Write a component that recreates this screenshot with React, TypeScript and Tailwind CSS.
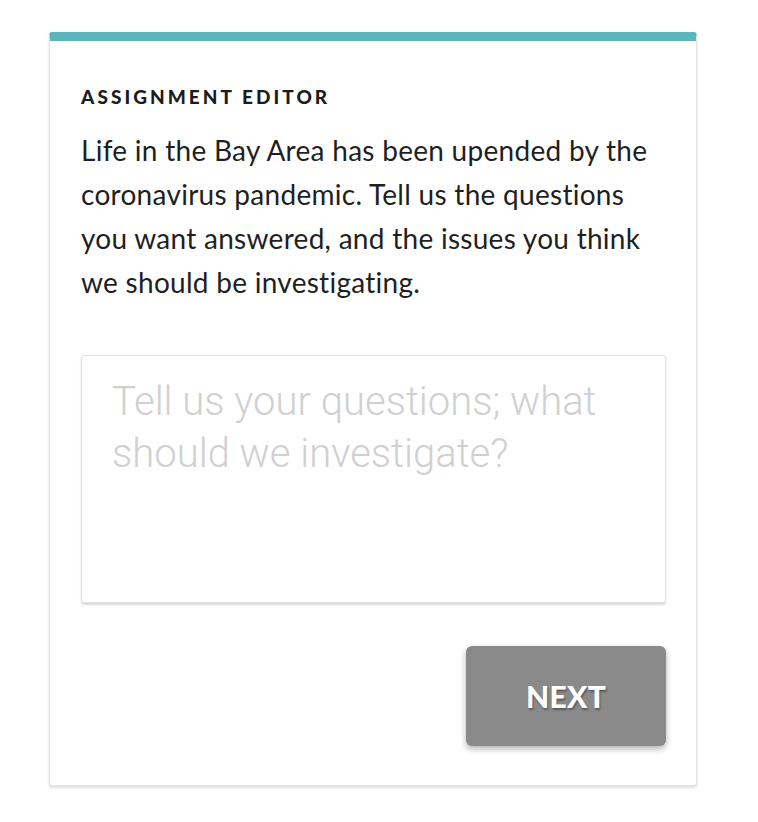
export default function App() {
  return (
    <div className="min-h-screen bg-white pt-8 pl-[49px]" style={{ fontFamily: "Lato, 'Noto Sans', sans-serif" }}>
      <div className="w-[648px] h-[754px] rounded-[3px] border-x border-b border-[#e3e3e3] border-t-[9px] border-t-[#5bb5bc] bg-white shadow-[0_2px_3px_rgba(0,0,0,0.12)] px-[31px] pt-[45px]">
        <h2 className="text-[19px] font-black tracking-[0.16em] text-[#1c1c1c] leading-[22px] uppercase">
          Assignment Editor
        </h2>
        <p className="mt-[20px] text-[28px] leading-[44px] tracking-[0.01em] text-[#1f1f1f]">
          Life in the Bay Area has been upended by the coronavirus pandemic. Tell us the questions you want answered, and the issues you think we should be investigating.
        </p>
        <textarea
          placeholder="Tell us your questions; what should we investigate?"
          className="mt-[51px] block w-[585px] h-[248px] resize-none rounded-[3px] border border-[#e2e2e2] shadow-[0_2px_2px_rgba(0,0,0,0.15)] px-[30px] pt-[20px] text-[40px] leading-[52px] font-light text-[#333] placeholder:text-[#d0d0d0] outline-none"
          style={{ fontFamily: "Roboto, sans-serif" }}
        />
        <div className="flex justify-end mt-[43px] -mr-[1px]">
          <button className="w-[200px] h-[100px] rounded-[6px] bg-[#8a8a8a] text-white text-[30px] font-black tracking-[0.01em] shadow-[0_3px_6px_rgba(0,0,0,0.3)] [text-shadow:1px_2px_2px_rgba(0,0,0,0.35)]">
            NEXT
          </button>
        </div>
      </div>
    </div>
  );
}
